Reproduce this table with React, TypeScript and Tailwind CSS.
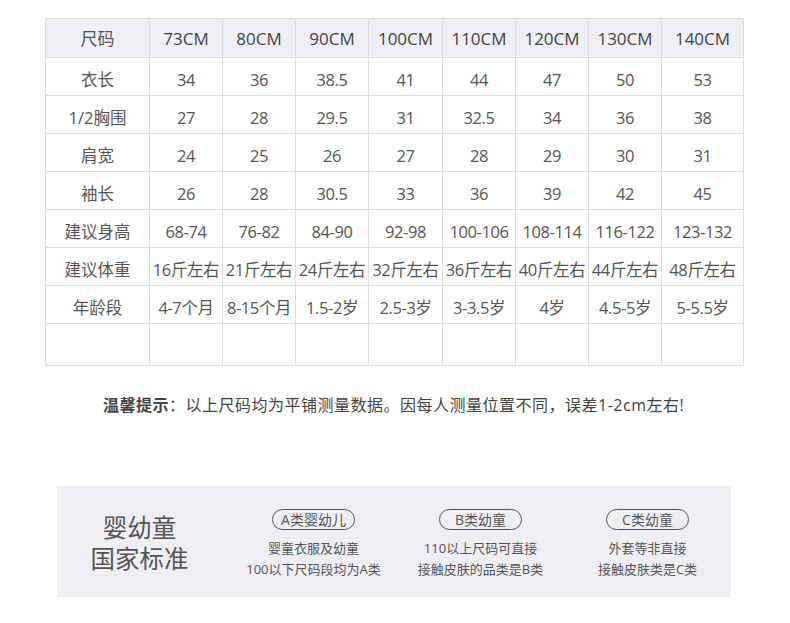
const font = { fontFamily: '"Open Sans", "Noto Sans CJK SC", sans-serif' }

const sizes = ["73CM", "80CM", "90CM", "100CM", "110CM", "120CM", "130CM", "140CM"]
const widths = ["w-[73px]", "w-[73px]", "w-[73px]", "w-[74px]", "w-[73px]", "w-[73px]", "w-[73px]", "w-[82px]"]

const rows: [string, string[]][] = [
  ["衣长", ["34", "36", "38.5", "41", "44", "47", "50", "53"]],
  ["1/2胸围", ["27", "28", "29.5", "31", "32.5", "34", "36", "38"]],
  ["肩宽", ["24", "25", "26", "27", "28", "29", "30", "31"]],
  ["袖长", ["26", "28", "30.5", "33", "36", "39", "42", "45"]],
  ["建议身高", ["68-74", "76-82", "84-90", "92-98", "100-106", "108-114", "116-122", "123-132"]],
  ["建议体重", ["16斤左右", "21斤左右", "24斤左右", "32斤左右", "36斤左右", "40斤左右", "44斤左右", "48斤左右"]],
  ["年龄段", ["4-7个月", "8-15个月", "1.5-2岁", "2.5-3岁", "3-3.5岁", "4岁", "4.5-5岁", "5-5.5岁"]],
]

const cats = [
  { tag: "A类婴幼儿", lines: ["婴童衣服及幼童", "100以下尺码段均为A类"] },
  { tag: "B类幼童", lines: ["110以上尺码可直接", "接触皮肤的品类是B类"] },
  { tag: "C类幼童", lines: ["外套等非直接", "接触皮肤类是C类"] },
]

export default function App() {
  return (
    <div className="w-[790px] h-[623px] bg-white text-[#555] overflow-hidden" style={font}>
      <div className="pl-[45px] pt-[18px]">
        <table className="border-collapse table-fixed">
          <thead>
            <tr className="h-[39px] bg-[#efeff4] text-[17px]">
              <th className="w-[104px] border border-[#dedede] font-normal pt-[2px]">尺码</th>
              {sizes.map((s, i) => (
                <th key={s} className={`${widths[i]} border border-[#dedede] font-normal text-[#444] whitespace-nowrap pt-[2px]`}>
                  {s}
                </th>
              ))}
            </tr>
          </thead>
          <tbody className="text-[16.5px]">
            {rows.map(([label, vals]) => (
              <tr key={label} className="h-[38px]">
                <td className="border border-[#dedede] text-center pt-[6px] leading-[24px]">{label}</td>
                {vals.map((v, i) => (
                  <td key={i} className="border border-[#dedede] text-center whitespace-nowrap tracking-[-0.4px] pt-[6px] leading-[24px]">
                    {v}
                  </td>
                ))}
              </tr>
            ))}
            <tr className="h-[42px]">
              <td className="border border-[#dedede]"></td>
              {sizes.map((s) => (
                <td key={s} className="border border-[#dedede]"></td>
              ))}
            </tr>
          </tbody>
        </table>
      </div>

      <p className="mt-[27px] pl-[103px] text-[16px] tracking-[0.5px] text-[#444]">
        <span className="font-bold">温馨提示</span>：以上尺码均为平铺测量数据。因每人测量位置不同，误差1-2cm左右!
      </p>

      <div className="ml-[57px] mt-[69px] w-[674px] h-[111px] bg-[#efeef3] flex items-center">
        <div className="w-[180px] pr-[8px] pt-[3px] flex flex-col items-center text-[24.5px] leading-[31px] text-[#555]">
          <span>婴幼童</span>
          <span>国家标准</span>
        </div>
        <div className="flex flex-1 pt-[6px]">
          {cats.map((c) => (
            <div key={c.tag} className="w-[167px] flex flex-col items-center">
              <span className="w-[83px] h-[21px] flex items-center justify-center rounded-full border border-[#555] text-[14px] leading-none text-[#555]">
                {c.tag}
              </span>
              <span className="mt-[8px] text-[13px] leading-[21px] text-[#555]">{c.lines[0]}</span>
              <span className="text-[13px] leading-[21px] text-[#555]">{c.lines[1]}</span>
            </div>
          ))}
        </div>
      </div>
    </div>
  )
}
